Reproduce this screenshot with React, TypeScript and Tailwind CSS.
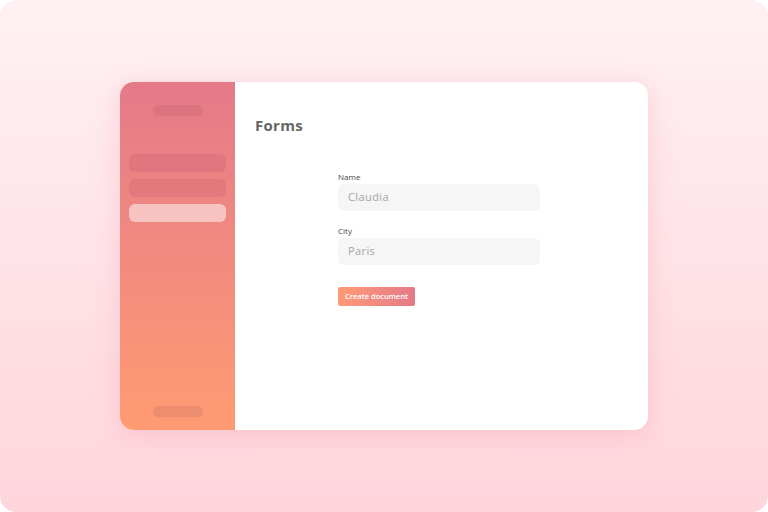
import React from 'react';

const font = { fontFamily: '"Open Sans", "Noto Sans", sans-serif' };

const Field: React.FC<{ label: string; value: string }> = ({ label, value }) => (
  <div className="flex flex-col">
    <label className="text-[8px] leading-[10px] text-[#444] mb-[2px]">{label}</label>
    <div className="h-[27px] rounded-[6px] bg-[#f6f6f6] flex items-center px-[10px] text-[11px] text-[#a5a5a5] tracking-[0.4px]">
      {value}
    </div>
  </div>
);

export default function App() {
  return (
    <div className="w-[768px] h-[512px] bg-white" style={font}>
      <div className="w-full h-full rounded-[16px] bg-gradient-to-b from-[#fff1f3] to-[#ffd5dc] flex items-center justify-center">
        <div className="w-[528px] h-[348px] rounded-[14px] bg-white flex overflow-hidden shadow-[0_4px_24px_rgba(240,150,165,0.35)]">
          {/* Sidebar */}
          <aside className="w-[115px] shrink-0 bg-gradient-to-b from-[#e47a88] to-[#ff9b72] flex flex-col items-center pt-[23px] pb-[13px]">
            <div className="w-[50px] h-[11px] rounded-full bg-[#d46e7a]/60" />
            <div className="w-full px-[9px] mt-[38px] flex flex-col gap-[7px]">
              <div className="h-[18px] rounded-[6px] bg-[#d9707c]/60" />
              <div className="h-[18px] rounded-[6px] bg-[#dc737a]/60" />
              <div className="h-[18px] rounded-[6px] bg-[#f8c4c2]" />
            </div>
            <div className="mt-auto w-[50px] h-[11px] rounded-full bg-[#e98a6e]/80" />
          </aside>

          {/* Main */}
          <main className="flex-1 pl-[20px] pt-[33px]">
            <h1 className="text-[15px] leading-[20px] font-bold text-[#666] tracking-[0.3px]">Forms</h1>
            <div className="ml-[83px] mt-[37px] w-[202px] flex flex-col gap-[15px]">
              <Field label="Name" value="Claudia" />
              <Field label="City" value="Paris" />
              <button className="mt-[7px] self-start w-[77px] h-[19px] rounded-[2px] bg-gradient-to-r from-[#ff9a76] to-[#e47a88] text-white text-[7.5px] font-semibold flex items-center justify-center">
                Create document
              </button>
            </div>
          </main>
        </div>
      </div>
    </div>
  );
}
